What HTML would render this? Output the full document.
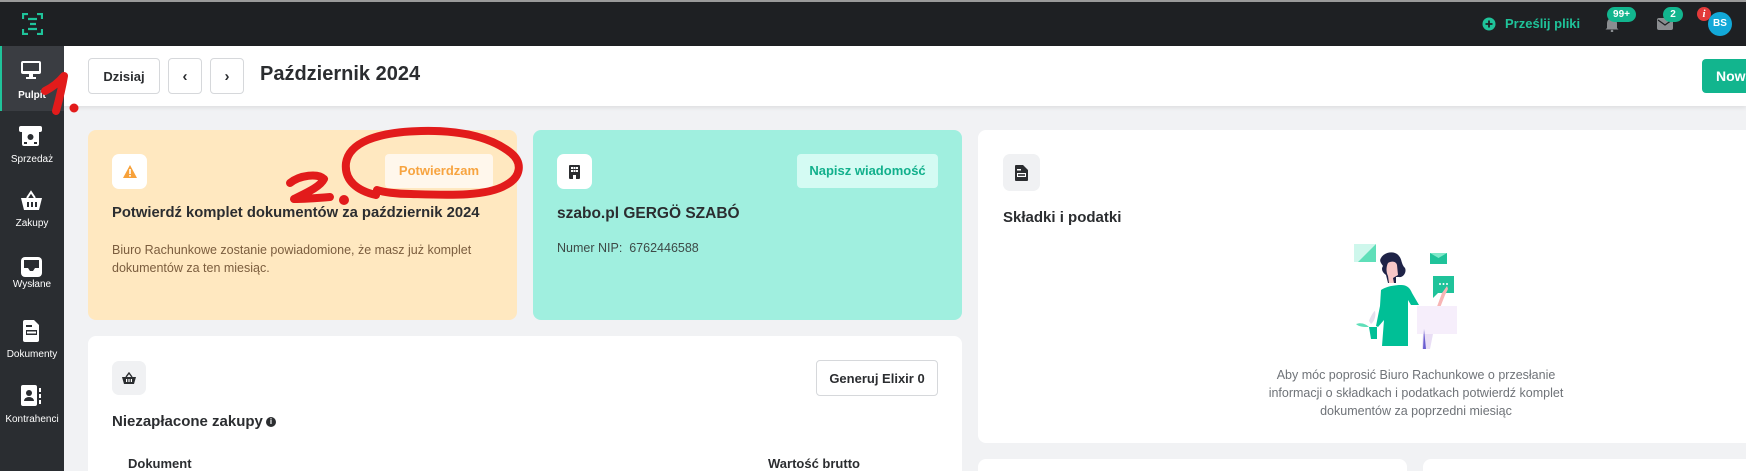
<!DOCTYPE html>
<html><head><meta charset="utf-8"><style>
*{box-sizing:border-box;margin:0;padding:0}
html{width:1746px;height:471px;overflow:hidden}
body{width:1746px;height:471px;overflow:hidden;background:#f1f2f4;font-family:"Liberation Sans",sans-serif;position:relative;color:#2b2d30}
.abs{position:absolute}
.top{left:0;top:0;width:1746px;height:46px;background:#1e2023;border-top:2px solid #9a9a9a}
.side{left:0;top:46px;width:64px;height:425px;background:#2a2d31}
.nav{position:absolute;left:0;width:64px;text-align:center;color:#fff;font-size:10px}
.hdr{left:64px;top:46px;width:1682px;height:60px;background:#fff;box-shadow:0 2px 4px rgba(0,0,0,.08)}
.btn{position:absolute;border:1px solid #d6d8db;border-radius:4px;background:#fff;font-size:13px;font-weight:bold;display:flex;align-items:center;justify-content:center;color:#2b2d30}
.card{position:absolute;border-radius:8px}
.ib{position:absolute;width:35px;height:35px;border-radius:7px;display:flex;align-items:center;justify-content:center}
</style></head><body>
<div class="abs top"></div>
<svg class="abs" style="left:22px;top:13px" width="21" height="22" viewBox="0 0 21 22" fill="none" stroke="#1fc39a" stroke-width="2.2"><path d="M6 1H1v5M15 1h5v5M6 21H1v-5M15 21h5v-5M6 6h9M8 11h6M6 16h9"/></svg>
<svg class="abs" style="left:1482px;top:17px" width="14" height="14"><circle cx="7" cy="7" r="6.5" fill="#1fc39a"/><path d="M7 3.5v7M3.5 7h7" stroke="#1e2023" stroke-width="1.8"/></svg>
<div class="abs" style="left:1505px;top:16px;font-size:13px;font-weight:bold;color:#1fc39a">Prześlij pliki</div>
<svg class="abs" style="left:1605px;top:16px" width="14" height="16"><path d="M2 12V7a5 5 0 0110 0v5l1.5 1.5h-13z" fill="#8a8d90"/><circle cx="7" cy="15" r="1.3" fill="#8a8d90"/></svg>
<div class="abs" style="left:1607px;top:7px;width:29px;height:15px;border-radius:8px;background:#12b58e;color:#fff;font-size:10px;font-weight:bold;text-align:center;line-height:15px">99+</div>
<svg class="abs" style="left:1657px;top:18px" width="16" height="12"><rect width="16" height="12" rx="2" fill="#8a8d90"/><path d="M1 2l7 5 7-5" stroke="#1e2023" stroke-width="1.3" fill="none"/></svg>
<div class="abs" style="left:1663px;top:7px;width:20px;height:15px;border-radius:8px;background:#12b58e;color:#fff;font-size:10px;font-weight:bold;text-align:center;line-height:15px">2</div>
<div class="abs" style="left:1697px;top:7px;width:14px;height:14px;border-radius:7px;background:#e23a3a;color:#fff;font-size:11px;font-weight:bold;font-style:italic;font-family:'Liberation Serif',serif;text-align:center;line-height:14px">i</div>
<div class="abs" style="left:1708px;top:12px;width:24px;height:24px;border-radius:12px;background:#12a8d8;color:#fff;font-size:10px;font-weight:bold;text-align:center;line-height:24px">BS</div>

<div class="abs side"></div>
<div class="abs" style="left:0;top:46px;width:64px;height:65px;background:#3a3d42;border-left:2px solid #1fc39a"></div>
<svg class="abs" style="left:20px;top:60px" width="22" height="20"><rect x="1" y="1" width="20" height="13" rx="2" fill="#fff"/><rect x="3" y="3" width="16" height="8" fill="#3a3d42"/><rect x="9" y="14" width="4" height="3" fill="#fff"/><rect x="6" y="17" width="10" height="2" fill="#fff"/></svg>
<div class="nav" style="top:90px;font-weight:bold">Pulpit</div>
<svg class="abs" style="left:18px;top:125px" width="25" height="22"><rect x="1" y="1" width="23" height="6" rx="2" fill="#fff"/><rect x="4" y="5" width="17" height="16" rx="2" fill="#fff"/><circle cx="12.5" cy="12" r="3" fill="#2a2d31"/><rect x="6" y="17" width="3" height="2" fill="#2a2d31"/><rect x="16" y="17" width="3" height="2" fill="#2a2d31"/></svg>
<div class="nav" style="top:154px">Sprzedaż</div>
<svg class="abs" style="left:20px;top:190px" width="23" height="21"><path d="M7 8L11 2l4 6" stroke="#fff" stroke-width="2" fill="none"/><path d="M1 8h21l-3 12H4z" fill="#fff"/><rect x="7" y="12" width="2" height="5" fill="#2a2d31"/><rect x="11" y="12" width="2" height="5" fill="#2a2d31"/><rect x="15" y="12" width="2" height="5" fill="#2a2d31"/></svg>
<div class="nav" style="top:218px">Zakupy</div>
<svg class="abs" style="left:21px;top:257px" width="21" height="20"><rect x="0" y="0" width="21" height="20" rx="4" fill="#fff"/><path d="M3 3h15v8h-4l-2 3h-3l-2-3H3z" fill="#2a2d31"/></svg>
<div class="nav" style="top:279px">Wysłane</div>
<svg class="abs" style="left:23px;top:320px" width="17" height="22"><path d="M2 0h9l5 5v15a2 2 0 01-2 2H2a2 2 0 01-2-2V2a2 2 0 012-2z" fill="#fff"/><rect x="3" y="5" width="6" height="2" fill="#2a2d31"/><rect x="3" y="10" width="11" height="5" fill="#2a2d31"/><rect x="4" y="11.5" width="9" height="2" fill="#fff"/></svg>
<div class="nav" style="top:349px">Dokumenty</div>
<svg class="abs" style="left:21px;top:385px" width="20" height="21"><rect x="0" y="0" width="16" height="21" rx="2" fill="#fff"/><circle cx="8" cy="8" r="3" fill="#2a2d31"/><path d="M3 16a5 4 0 0110 0z" fill="#2a2d31"/><rect x="18" y="3" width="2" height="4" fill="#fff"/><rect x="18" y="9" width="2" height="4" fill="#fff"/><rect x="18" y="15" width="2" height="4" fill="#fff"/></svg>
<div class="nav" style="top:414px">Kontrahenci</div>

<div class="abs hdr"></div>
<div class="btn" style="left:88px;top:58px;width:72px;height:36px">Dzisiaj</div>
<div class="btn" style="left:168px;top:58px;width:34px;height:36px;font-size:15px">&#8249;</div>
<div class="btn" style="left:210px;top:58px;width:34px;height:36px;font-size:15px">&#8250;</div>
<div class="abs" style="left:260px;top:63px;font-size:20px;font-weight:bold">Październik 2024</div>
<div class="abs" style="left:1702px;top:59px;width:44px;height:34px;border-radius:4px 0 0 4px;background:#12b58e;color:#fff;font-size:14px;font-weight:bold;padding:9px 0 0 14px;overflow:hidden;white-space:nowrap">Nowa</div>

<div class="card" style="left:88px;top:130px;width:429px;height:190px;background:#ffe8c0"></div>
<div class="ib" style="left:112px;top:154px;background:#fff"><svg width="14" height="13"><path d="M7 0L14 13H0z" fill="#f7a13a"/><rect x="6.2" y="4" width="1.6" height="5" fill="#fff"/><rect x="6.2" y="10" width="1.6" height="1.6" fill="#fff"/></svg></div>
<div class="abs" style="left:385px;top:154px;width:108px;height:34px;border-radius:4px;background:#fff7ec;color:#f7a440;font-size:13px;font-weight:bold;text-align:center;line-height:34px">Potwierdzam</div>
<div class="abs" style="left:112px;top:205px;font-size:14.8px;font-weight:bold">Potwierdź komplet dokumentów za październik 2024</div>
<div class="abs" style="left:112px;top:241px;font-size:12.5px;line-height:18px;color:#7b5d3e">Biuro Rachunkowe zostanie powiadomione, że masz już komplet<br>dokumentów za ten miesiąc.</div>

<div class="card" style="left:533px;top:130px;width:429px;height:190px;background:#a0efdf"></div>
<div class="ib" style="left:557px;top:154px;background:#fff"><svg width="11" height="14"><rect width="11" height="14" rx="1" fill="#2b2d30"/><g fill="#fff"><rect x="2" y="2" width="2" height="2"/><rect x="4.5" y="2" width="2" height="2"/><rect x="7" y="2" width="2" height="2"/><rect x="2" y="5" width="2" height="2"/><rect x="4.5" y="5" width="2" height="2"/><rect x="7" y="5" width="2" height="2"/><rect x="4" y="10" width="3" height="4"/></g></svg></div>
<div class="abs" style="left:797px;top:154px;width:141px;height:34px;border-radius:4px;background:#d4fbf3;color:#12b08c;font-size:13px;font-weight:bold;text-align:center;line-height:34px">Napisz wiadomość</div>
<div class="abs" style="left:557px;top:205px;font-size:15.5px;font-weight:bold">szabo.pl GERGÖ SZABÓ</div>
<div class="abs" style="left:557px;top:241px;font-size:12.5px;color:#3d4a47">Numer NIP:&nbsp; 6762446588</div>

<div class="abs" style="left:978px;top:130px;width:768px;height:313px;background:#fff;border-radius:8px 0 0 8px"></div>
<div class="ib" style="left:1003px;top:154px;width:37px;height:37px;background:#f0f1f3"><svg width="13" height="16"><path d="M1 0h7l5 5v10a1 1 0 01-1 1H1a1 1 0 01-1-1V1a1 1 0 011-1z" fill="#2b2d30"/><rect x="2" y="4" width="4" height="1.5" fill="#fff"/><rect x="2" y="8" width="9" height="4" fill="#fff"/><rect x="3" y="9.2" width="7" height="1.6" fill="#2b2d30"/></svg></div>
<div class="abs" style="left:1003px;top:209px;font-size:15px;font-weight:bold">Składki i podatki</div>
<svg class="abs" style="left:1354px;top:243px" width="105" height="107" viewBox="0 0 105 107">
<path d="M0 1h22L8 19H0z" fill="#cef7ec"/><path d="M22 1L4 19h18z" fill="#5fdfb9"/>
<rect x="76" y="10" width="17" height="11" fill="#1fc39a"/><path d="M76 10l8.5 5 8.5-5" fill="#7fe8c9"/>
<path d="M79 33h21v17H84l-5 5z" fill="#1fc39a"/><circle cx="86" cy="41" r="1" fill="#fff"/><circle cx="89.5" cy="41" r="1" fill="#fff"/><circle cx="93" cy="41" r="1" fill="#fff"/>
<path d="M27 15c3-6 14-8 18-2 3 3 2 8 6 12 2 4-2 10-6 9l-3 0v6h-8l-2-8c-4-3-5-6-3-9-2-3-4-5-2-8z" fill="#1f2347"/>
<path d="M34 20c3-2 8-2 9 2l1 10-5 3 1 5h-5l-1-7c-2-4-2-9 0-13z" fill="#f7c7c7"/>
<path d="M27 47c4-3 12-5 20-5 6 0 9 3 11 8l7 12h-8l-3-5v46H28l2-26-6 7-2-1 4-20z" fill="#00bf96"/>
<path d="M88 50l5-7 1 3-3 6-7 18-3-1z" fill="#f7b5b5"/>
<rect x="63" y="63" width="40" height="28" fill="#f6eefb"/><path d="M69 91h10l-3 15h-8z" fill="#e9def5"/><path d="M70 86l2 20h-3z" fill="#6b5fd1"/>
<path d="M15 78c2-6 6-11 6-10 1 4 0 10-4 13z" fill="#e4dfee"/><path d="M2 81c5-2 10 0 13 3-5 0-10 0-13-3z" fill="#5fdfb9"/><path d="M15 84h8v12h-6z" fill="#00bf96"/>
</svg>
<div class="abs" style="left:1166px;top:366px;width:500px;text-align:center;font-size:12.5px;line-height:18px;color:#6f7378">Aby móc poprosić Biuro Rachunkowe o przesłanie<br>informacji o składkach i podatkach potwierdź komplet<br>dokumentów za poprzedni miesiąc</div>
<div class="abs" style="left:978px;top:459px;width:429px;height:12px;background:#fff;border-radius:8px 8px 0 0"></div>
<div class="abs" style="left:1423px;top:459px;width:323px;height:12px;background:#fff;border-radius:8px 0 0 0"></div>

<div class="abs" style="left:88px;top:336px;width:874px;height:135px;background:#fff;border-radius:8px 8px 0 0"></div>
<div class="ib" style="left:112px;top:361px;width:34px;height:34px;background:#f0f1f3"><svg width="14" height="12"><path d="M4 5L7 1l3 4" stroke="#2b2d30" stroke-width="1.4" fill="none"/><path d="M0 5h14l-2 7H2z" fill="#2b2d30"/><rect x="4" y="7" width="1.2" height="3" fill="#fff"/><rect x="6.4" y="7" width="1.2" height="3" fill="#fff"/><rect x="8.8" y="7" width="1.2" height="3" fill="#fff"/></svg></div>
<div class="btn" style="left:816px;top:360px;width:122px;height:36px">Generuj Elixir 0</div>
<div class="abs" style="left:112px;top:413px;font-size:15px;font-weight:bold">Niezapłacone zakupy</div>
<div class="abs" style="left:266px;top:417px;width:10px;height:10px;border-radius:5px;background:#2b2d30;color:#fff;font-size:8px;font-weight:bold;text-align:center;line-height:10px">i</div>
<div class="abs" style="left:128px;top:456px;height:15px;overflow:hidden;font-size:13px;font-weight:bold;color:#2b2d30">Dokument</div>
<div class="abs" style="left:768px;top:456px;height:15px;overflow:hidden;font-size:13px;font-weight:bold;color:#2b2d30">Wartość brutto</div>

<svg class="abs" style="left:0;top:0" width="1746" height="471" fill="none" stroke="#e21b1b" stroke-linecap="round" stroke-linejoin="round">
<path d="M45 91c8-4 14-9 19-15-2 12-5 24-8 35" stroke-width="8"/><circle cx="74" cy="108" r="4.5" fill="#e21b1b" stroke="none"/>
<path d="M376 195c-18-4-32-14-30-32 3-20 30-31 75-32 40-1 70 6 90 22 12 10 10 24-5 32-20 12-60 10-95 9-15 0-28-2-34-4" stroke-width="8"/>
<path d="M290 183c10-8 28-10 34-4-4 8-18 14-30 20 12 0 24-1 36-2" stroke-width="8"/><circle cx="344" cy="200" r="5" fill="#e21b1b" stroke="none"/>
</svg>
</body></html>
